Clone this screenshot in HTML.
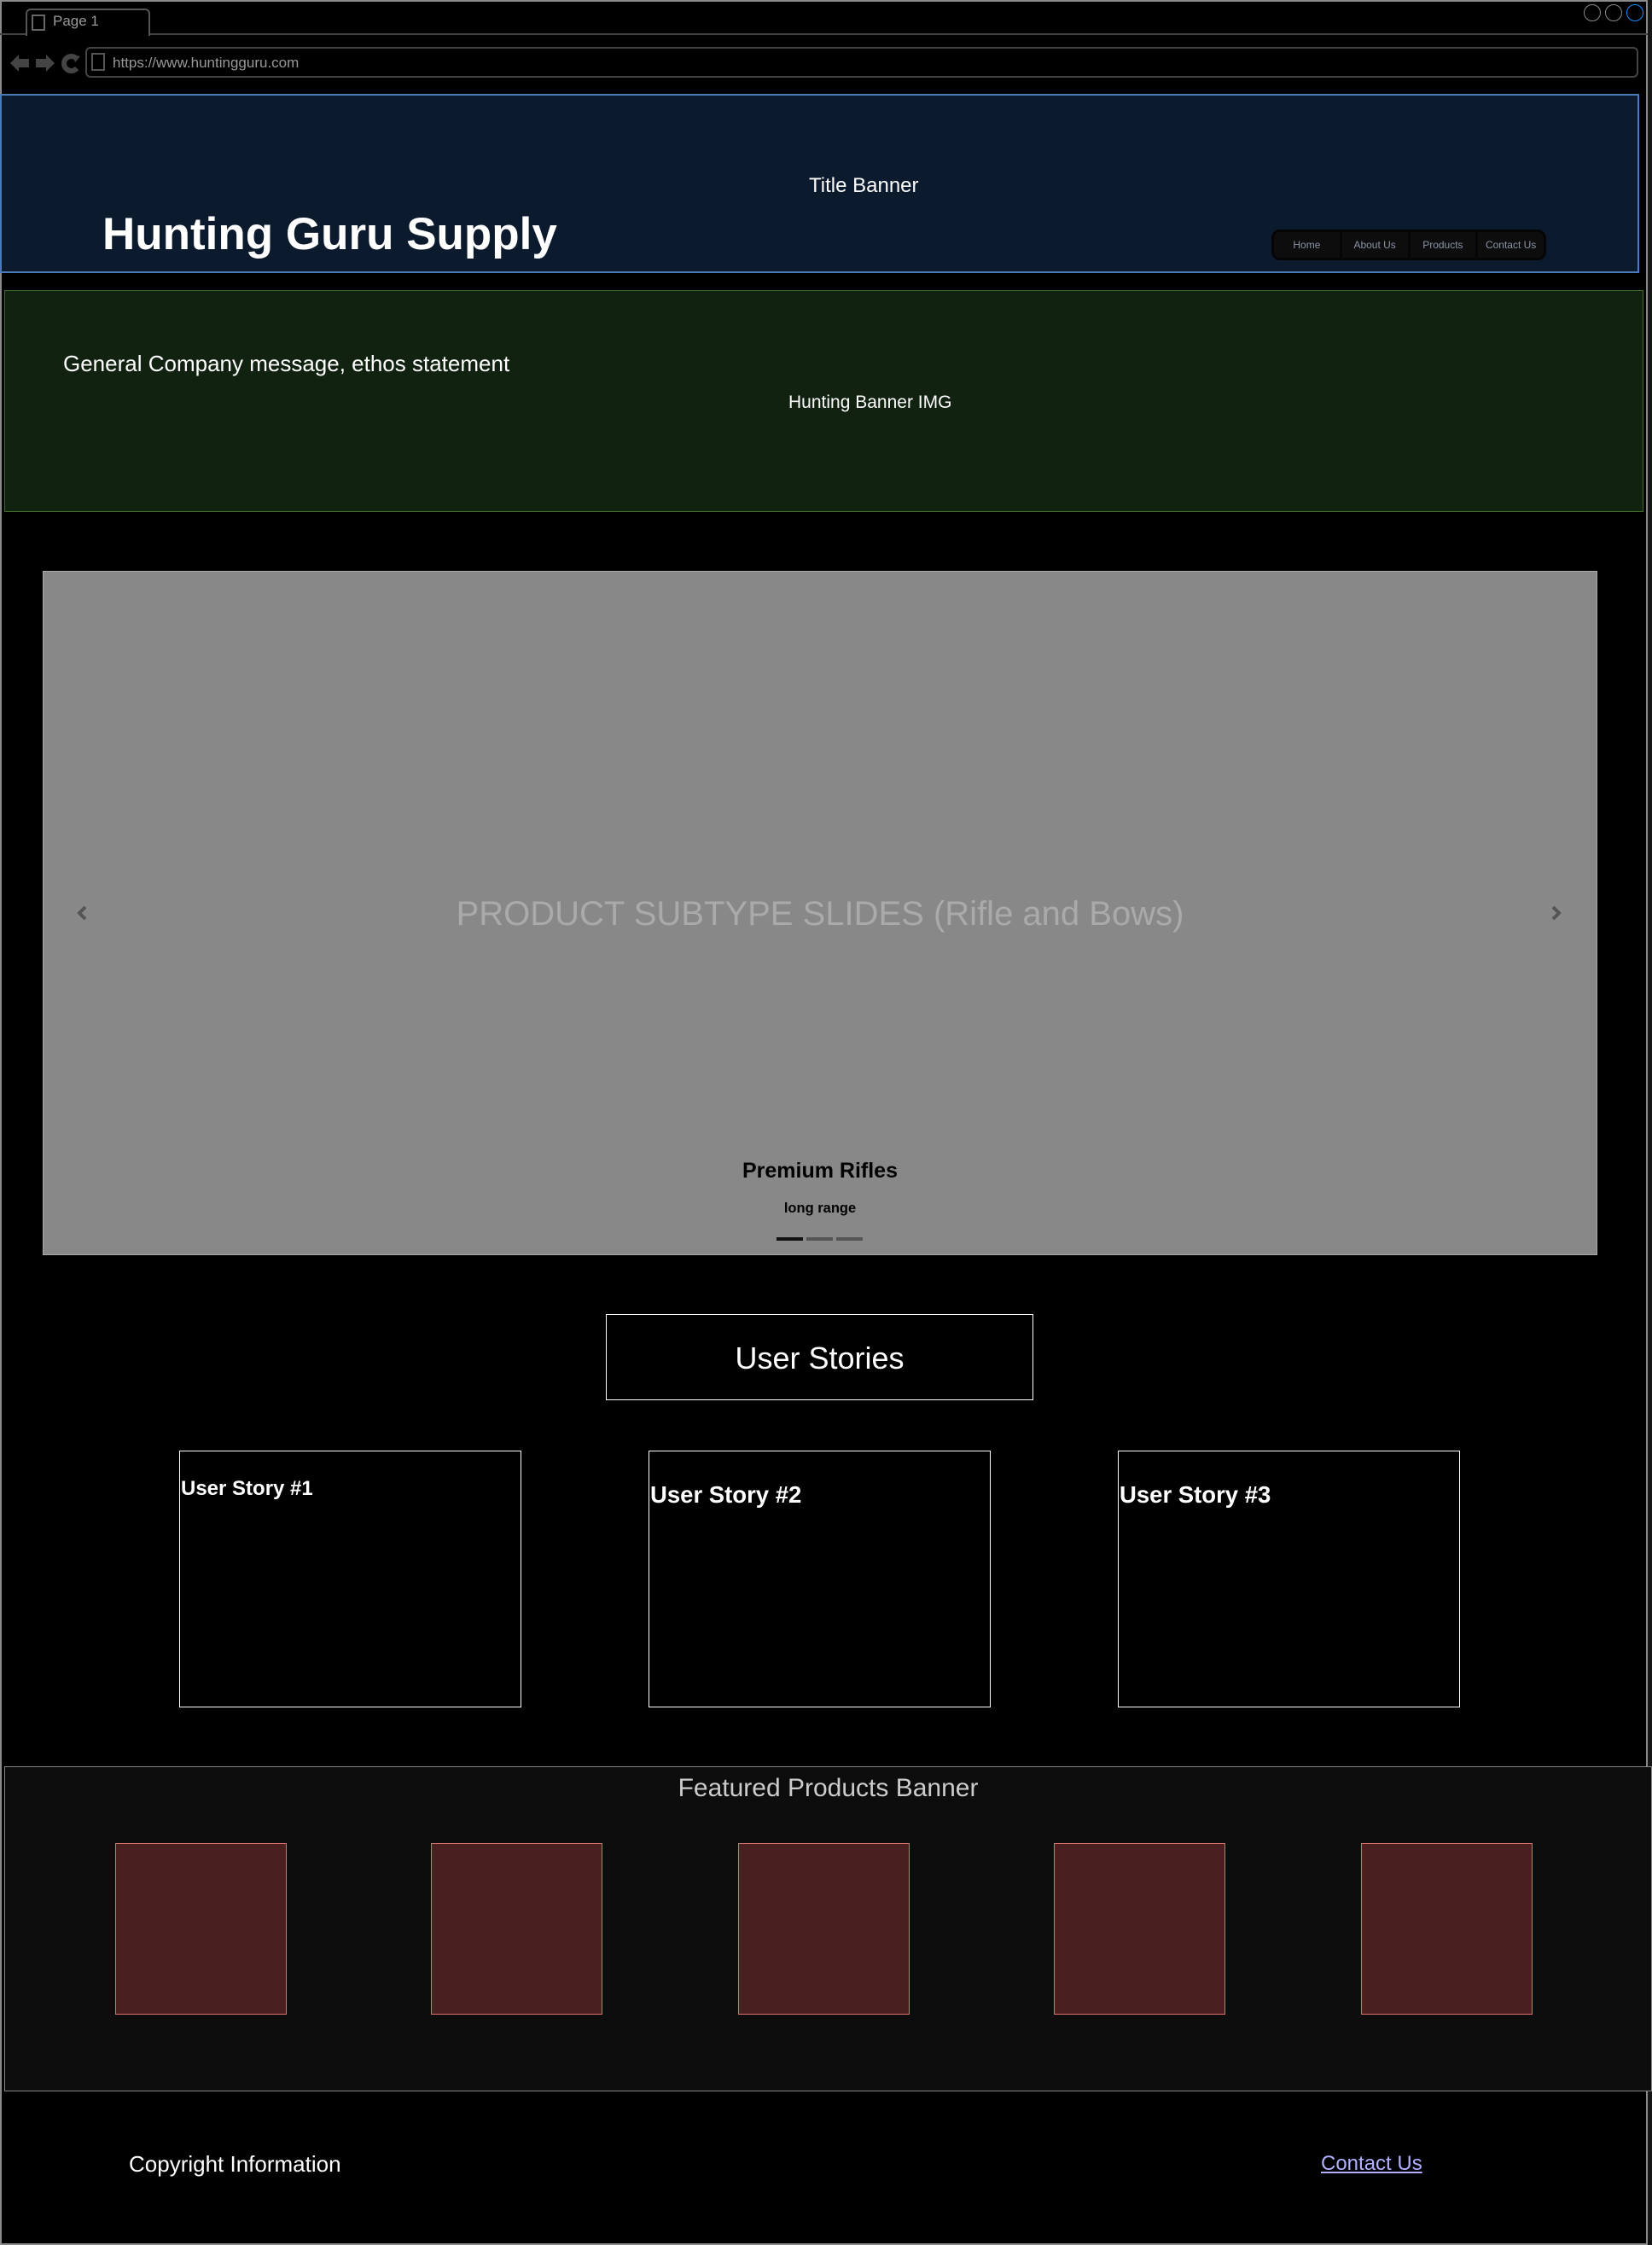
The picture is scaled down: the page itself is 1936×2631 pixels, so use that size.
<!DOCTYPE html>
<html><head><meta charset="utf-8"><style>
*{margin:0;padding:0;box-sizing:border-box}
body{width:1936px;height:2631px;background:#151515;font-family:"Liberation Sans",Arial,sans-serif;position:relative;overflow:hidden}
.a{position:absolute}
.frame{left:0;top:0;width:1931px;height:2631px;background:#000;border:2px solid #8a8a8a}
.t{white-space:nowrap}
.sq{position:absolute;top:2160px;width:201px;height:201px;background:#4a1f1f;border:1.5px solid #e07070}
.card{position:absolute;top:1700px;width:401px;height:301px;border:1.5px solid #fff}
.card span{position:absolute;left:1px;color:#fff;font-weight:bold;font-size:27.5px;white-space:nowrap}
</style></head><body>
<div class="a frame"></div>
<div class="a" style="left:0;top:39px;width:1931px;height:2px;background:#444"></div>
<div class="a" style="left:30px;top:10px;width:146px;height:32px;border:2px solid #555;border-bottom:none;border-radius:6px 6px 0 0;background:#000"></div>
<div class="a" style="left:37px;top:17px;width:16px;height:19px;border:2px solid #666"></div>
<div class="a t" style="left:62px;top:15px;font-size:17px;color:#999">Page 1</div>
<div class="a" style="left:1856px;top:5px;width:20px;height:20px;border:1.5px solid #888;border-radius:50%"></div>
<div class="a" style="left:1881px;top:5px;width:20px;height:20px;border:1.5px solid #888;border-radius:50%"></div>
<div class="a" style="left:1906px;top:5px;width:20px;height:20px;border:1.5px solid #1a8cff;border-radius:50%"></div>
<svg class="a" style="left:10px;top:60px" width="85" height="28" viewBox="0 0 85 28">
<path d="M2 14 L12 4 L12 9 L24 9 L24 19 L12 19 L12 24 Z" fill="#444"/>
<path d="M54 14 L44 4 L44 9 L32 9 L32 19 L44 19 L44 24 Z" fill="#444"/>
<path d="M80 9 A8.5 8.5 0 1 0 80 20" stroke="#444" stroke-width="6" fill="none"/><path d="M75 4 L84 6 L78 13 Z" fill="#444"/>
</svg>
<div class="a" style="left:100px;top:55px;width:1820px;height:36px;border:2px solid #444;border-radius:6px"></div>
<div class="a" style="left:107px;top:62px;width:16px;height:21px;border:2px solid #555"></div>
<div class="a t" style="left:132px;top:64px;font-size:17px;color:#999">https://www.huntingguru.com</div>
<div class="a" style="left:0;top:110px;width:1921px;height:210px;background:#0c1a2e;border:2px solid #4a7ab8"></div>
<div class="a t" style="left:948px;top:204px;font-size:24px;color:#fff">Title Banner</div>
<div class="a t" style="left:120px;top:244px;font-size:53px;font-weight:bold;color:#fff">Hunting Guru Supply</div>
<div class="a" style="left:1490px;top:269px;width:322px;height:36px;background:#0d0d0d;border:3px solid #050505;border-radius:10px;display:flex">
<div style="flex:1;border-right:3px solid #050505;color:#8a93a8;font-size:12px;text-align:center;line-height:30px">Home</div>
<div style="flex:1;border-right:3px solid #050505;color:#8a93a8;font-size:12px;text-align:center;line-height:30px">About Us</div>
<div style="flex:1;border-right:3px solid #050505;color:#8a93a8;font-size:12px;text-align:center;line-height:30px">Products</div>
<div style="flex:1;color:#8a93a8;font-size:12px;text-align:center;line-height:30px">Contact Us</div>
</div>
<div class="a" style="left:5px;top:340px;width:1921px;height:260px;background:#112211;border:1.5px solid #3e6b2a"></div>
<div class="a t" style="left:74px;top:411px;font-size:26px;color:#fff">General Company message, ethos statement</div>
<div class="a t" style="left:924px;top:460px;font-size:21px;color:#fff">Hunting Banner IMG</div>
<div class="a" style="left:50px;top:669px;width:1822px;height:802px;background:#888;border:1.5px solid #aaa"></div>
<svg class="a" style="left:89px;top:1060px" width="14" height="20"><path d="M11 3 L4 10 L11 17" stroke="#555" stroke-width="4" fill="none"/></svg>
<svg class="a" style="left:1817px;top:1060px" width="14" height="20"><path d="M3 3 L10 10 L3 17" stroke="#555" stroke-width="4" fill="none"/></svg>
<div class="a t" style="left:0;width:1922px;top:1049px;text-align:center;font-size:40px;color:#aaa">PRODUCT SUBTYPE SLIDES (Rifle and Bows)</div>
<div class="a t" style="left:0;width:1922px;top:1358px;text-align:center;font-size:25px;font-weight:bold;color:#000">Premium Rifles</div>
<div class="a t" style="left:0;width:1922px;top:1407px;text-align:center;font-size:16.5px;font-weight:bold;color:#000">long range</div>
<div class="a" style="left:910px;top:1450px;width:31px;height:4px;background:#111"></div>
<div class="a" style="left:945px;top:1450px;width:31px;height:4px;background:#555"></div>
<div class="a" style="left:980px;top:1450px;width:31px;height:4px;background:#555"></div>
<div class="a" style="left:710px;top:1540px;width:501px;height:101px;border:1.5px solid #fff"></div>
<div class="a t" style="left:710px;width:501px;top:1571px;text-align:center;font-size:36px;color:#fff">User Stories</div>
<div class="card" style="left:210px"><span style="top:30px;font-size:24px">User Story #1</span></div>
<div class="card" style="left:760px"><span style="top:35px">User Story #2</span></div>
<div class="card" style="left:1310px"><span style="top:35px">User Story #3</span></div>
<div class="a" style="left:5px;top:2070px;width:1931px;height:381px;background:#0d0d0d;border:1.5px solid #888"></div>
<div class="a t" style="left:5px;width:1931px;top:2079px;text-align:center;font-size:30px;color:#ccc">Featured Products Banner</div>
<div class="sq" style="left:135px"></div>
<div class="sq" style="left:505px"></div>
<div class="sq" style="left:865px"></div>
<div class="sq" style="left:1235px"></div>
<div class="sq" style="left:1595px"></div>
<div class="a t" style="left:151px;top:2521px;font-size:26px;color:#fff">Copyright Information</div>
<div class="a t" style="left:1548px;top:2522px;font-size:24px;color:#b0b0ff;text-decoration:underline">Contact Us</div>
</body></html>
